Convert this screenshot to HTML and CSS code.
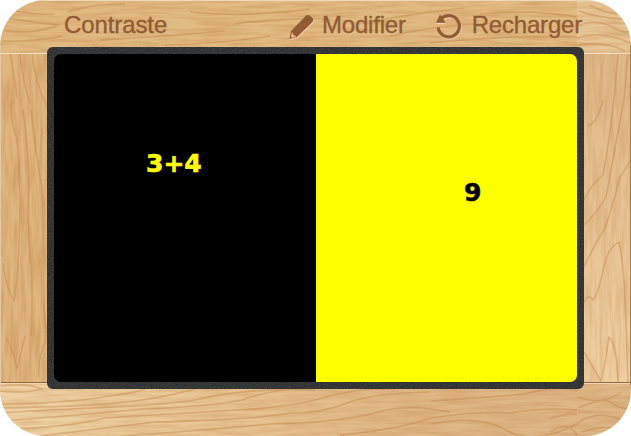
FILE: index.html
```html
<!DOCTYPE html>
<html lang="fr">
<head>
<meta charset="utf-8">
<title>Contraste</title>
<link rel="stylesheet" href="styles.css">
</head>
<body>
<main class="board">
  <svg class="wood" viewBox="0 0 631 436" aria-hidden="true">
    <defs>
      <filter id="grain-h" x="0" y="0" width="100%" height="100%" color-interpolation-filters="sRGB">
        <feTurbulence type="fractalNoise" baseFrequency=".025 .28" numOctaves="3" seed="8"/>
        <feColorMatrix values="0 0 0 0 .72  0 0 0 0 .47  0 0 0 0 .24  1.3 0 0 0 -.45"/>
      </filter>
      <filter id="grain-v" x="0" y="0" width="100%" height="100%" color-interpolation-filters="sRGB">
        <feTurbulence type="fractalNoise" baseFrequency=".28 .025" numOctaves="3" seed="5"/>
        <feColorMatrix values="0 0 0 0 .72  0 0 0 0 .47  0 0 0 0 .24  1.3 0 0 0 -.45"/>
      </filter>
      <linearGradient id="bottom"><stop offset="0" stop-color="#efd2a4"/><stop offset=".35" stop-color="#e8c594"/><stop offset=".65" stop-color="#dfb684"/><stop offset="1" stop-color="#dfb788"/></linearGradient>
      <linearGradient id="right" x2="0" y2="1"><stop stop-color="#dfb888"/><stop offset="1" stop-color="#efcfa1"/></linearGradient>
    </defs>
    <path fill="#e2bb83" d="M0 0h577v53H0z"/>
    <path fill="#e8c797" d="M577 0h54v53h-54z"/>
    <path fill="#e0b680" d="M0 53h48v329H0z"/>
    <path fill="url(#right)" d="M583 53h48v329h-48z"/>
    <path fill="url(#bottom)" d="M0 382h631v54H0z"/>
    <rect width="631" height="53" filter="url(#grain-h)" opacity=".5"/>
    <rect y="382" width="631" height="54" filter="url(#grain-h)" opacity=".38"/>
    <rect y="53" width="48" height="329" filter="url(#grain-v)" opacity=".55"/>
    <rect x="583" y="53" width="48" height="329" filter="url(#grain-v)" opacity=".38"/>
    <g class="veins">
      <path d="M8 18Q30 22 58 25Q38 34 5 31M15 11Q35 15 54 14M2 41Q35 42 62 36M68 12Q90 4 125 4M100 40Q170 36 225 31M165 45Q220 44 270 36M190 12Q245 18 310 9M235 24Q280 18 330 19M370 22Q410 14 465 8M390 36Q440 24 488 24M430 43Q500 35 577 37M480 14Q530 9 577 17"/>
      <path d="M579 11Q598 18 625 19M577 26Q596 18 612 27T631 29M577 38Q600 30 631 43M590 5Q602 12 617 14M578 45Q605 41 625 51"/>
      <path d="M10 53Q14 73 17 98M20 53Q23 83 30 103M32 53Q34 78 47 107M12 100Q9 118 17 139Q22 190 19 238Q18 280 14 301Q5 285 3 263M23 110Q29 150 29 190Q27 230 31 265Q33 300 31 336M31 110Q36 155 42 188L44 260Q42 300 47 340M7 338Q14 354 17 369Q21 353 25 336M39 377Q37 359 47 338"/>
      <path d="M584 200Q591 184 603 175Q608 150 614 100L618 53M584 225Q597 213 606 197L624 100L628 53M584 267Q594 245 605 228Q613 205 620 177Q627 167 630 160M584 303Q588 292 593 300Q599 292 603 270Q608 247 619 242Q624 265 625 300L628 382M584 352Q592 366 601 381Q605 365 609 337Q617 345 618 382M588 126Q598 122 603 100"/>
      <path d="M0 386Q29 383 42 389Q21 394 0 391M0 404Q68 403 103 397Q135 393 145 389M0 408C65 407 125 404 160 397Q185 392 195 389M0 413C80 407 145 408 195 400Q250 387 315 390M0 421Q82 415 143 409Q205 407 242 400Q275 388 310 389M5 429Q65 428 105 418Q170 414 220 411Q290 408 326 397Q355 388 395 389M40 436Q99 429 155 422Q250 420 290 413Q320 414 350 402Q375 393 430 392M120 436Q200 431 270 424Q340 423 382 411Q410 404 450 412M340 435Q400 429 431 418Q480 411 511 413Q545 407 577 410"/>
      <path d="M431 401Q490 397 525 394Q560 385 577 391M431 424Q480 414 506 430T577 424M549 419Q570 412 577 415M550 432Q568 420 577 435M578 397Q601 406 622 392M578 408Q603 397 610 402T626 409M577 423Q592 413 608 416T620 421M582 432Q603 425 616 429"/>
    </g>
    <path stroke="#f3dfc3" d="M0 53.5h48M583 53.5h48"/>
    <path stroke="#93683f" d="M0 382.5h48M583 382.5h48"/>
    <path stroke="#f0d6aa" d="M0 383.5h48M583 383.5h48"/>
    <path stroke="#ecd8ba" stroke-width="2" d="M0 0h631"/>
    <path stroke="#e5c9a4" stroke-width="2" d="M0 45v345"/>
    <path stroke="#a77b50" stroke-width="2" d="M631 45v340"/>
  </svg>
  <header class="toolbar">
    <h1 class="title">Contraste</h1>
    <nav class="actions">
      <a class="action modify">
        <svg class="icon" viewBox="0 0 27 28" aria-hidden="true">
          <path class="glow" transform="translate(.6 1)" d="M1.5 26 3 18 18 2.8Q20 1 22 2.8L24.5 5Q26.3 7 24.5 9L9 24Z"/>
          <path class="ink" d="M1.5 26 3 18 18 2.8Q20 1 22 2.8L24.5 5Q26.3 7 24.5 9L9 24Z"/>
          <path fill="#e6bd91" d="m4 19 1.4 3 3 1.5-4.2 1.3-1.3-1.4z"/>
        </svg>
        <span>Modifier</span>
      </a>
      <a class="action reload">
        <svg class="icon" viewBox="0 0 27 28" aria-hidden="true">
          <path class="arc light" transform="translate(.5 1)" d="M5.8 6.2A10.6 10.6 0 1 1 3.2 14.5"/>
          <path fill="#f2cdac" d="M1 9.5h9.5V11H1z"/>
          <path class="arc" d="M5.8 6.2A10.6 10.6 0 1 1 3.2 14.5"/>
          <path class="ink" d="m5 1.5 5.8 8.3H1z"/>
        </svg>
        <span>Recharger</span>
      </a>
    </nav>
  </header>
  <section class="frame">
    <svg class="speckle" aria-hidden="true"><filter id="noise" x="0" y="0" width="100%" height="100%" color-interpolation-filters="sRGB"><feTurbulence type="fractalNoise" baseFrequency=".65" numOctaves="2"/><feColorMatrix values="0 0 0 0 .34  0 0 0 0 .34  0 0 0 0 .34  1 0 0 0 -.3"/></filter><rect width="100%" height="100%" filter="url(#noise)"/></svg>
    <div class="screen">
      <div class="pane dark"><span>3+4</span></div>
      <div class="pane bright"><span>9</span></div>
    </div>
  </section>
</main>
</body>
</html>
```
FILE: styles.css
```css
body {
  margin: 0;
  background: #fff;
}

.board {
  position: relative;
  box-sizing: border-box;
  width: 631px;
  height: 436px;
  overflow: hidden;
  border-radius: 46px;
  display: grid;
  grid-template-rows: 47px 342px 47px;
  font-family: "Liberation Sans", Arial, sans-serif;
}

.wood {
  position: absolute;
  inset: 0;
  width: 100%;
  height: 100%;
}

.veins {
  fill: none;
  stroke: #bd7f43;
  stroke-width: 1.5;
  opacity: .4;
}

.toolbar {
  position: relative;
  display: flex;
  justify-content: space-between;
  align-items: center;
  padding: 3px 49px 0 64px;
  color: #915b34;
}

.title {
  margin: 0;
  font-size: 24px;
  font-weight: 400;
  line-height: 28px;
  letter-spacing: -.1px;
  -webkit-text-stroke: .35px currentColor;
}

.actions {
  display: flex;
  gap: 29px;
}

.action {
  display: flex;
  align-items: center;
  gap: 7px;
  font-size: 24px;
  line-height: 28px;
  letter-spacing: -.2px;
  -webkit-text-stroke: .35px currentColor;
}

.reload {
  gap: 10px;
}

.icon {
  width: 27px;
  height: 28px;
  margin-top: 3px;
}

.ink {
  fill: #915b34;
}

.glow {
  fill: #f5cfb0;
}

.arc {
  fill: none;
  stroke: #915b34;
  stroke-width: 3.2;
}

.light {
  stroke: #f5cfb0;
}

.frame {
  position: relative;
  box-sizing: border-box;
  width: 537px;
  margin-left: 47px;
  padding: 7px;
  border-radius: 6px;
  overflow: hidden;
  background: #2c2d2e;
}

.speckle {
  position: absolute;
  inset: 0;
  width: 100%;
  height: 100%;
}

.screen {
  position: relative;
  display: grid;
  grid-template-columns: 262px 261px;
  height: 328px;
  border-radius: 7px;
  overflow: hidden;
}

.pane {
  box-sizing: border-box;
  font: 700 25px/30px "DejaVu Sans", Verdana, sans-serif;
  -webkit-text-stroke: .6px currentColor;
}

.dark {
  padding: 95px 0 0 92px;
  color: #ff0;
  background: #000;
}

.bright {
  padding: 124px 0 0 148px;
  color: #000;
  background: #ff0;
}
```
